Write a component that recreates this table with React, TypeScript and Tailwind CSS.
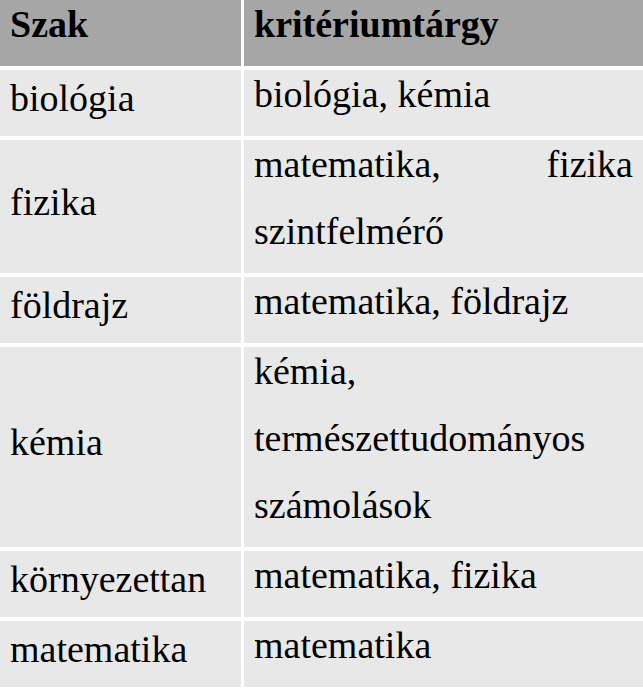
import { Fragment } from 'react';

const rows: { szak: string; targy: string }[] = [
  { szak: 'biológia', targy: 'biológia, kémia' },
  { szak: 'fizika', targy: 'matematika, fizika szintfelmérő' },
  { szak: 'földrajz', targy: 'matematika, földrajz' },
  { szak: 'kémia', targy: 'kémia, természettudományos számolások' },
  { szak: 'környezettan', targy: 'matematika, fizika' },
  { szak: 'matematika', targy: 'matematika' },
];

export default function App() {
  return (
    <div className="w-[643px] h-[696px] overflow-hidden bg-white text-black font-[Liberation_Serif]">
      <div className="grid grid-cols-[241px_1fr] gap-x-[3px] gap-y-[4px]">
        {/* Header */}
        <div className="bg-[#a6a6a6] pl-[10px] pb-[8px]">
          <div className="font-[Liberation_Serif] font-bold text-[38px] -mt-[9px] leading-[67px]">Szak</div>
        </div>
        <div className="bg-[#a6a6a6] pl-[10px] pb-[8px]">
          <div className="font-[Liberation_Serif] font-bold text-[38px] -mt-[9px] leading-[67px]">kritériumtárgy</div>
        </div>

        {/* Body */}
        {rows.map((r) => (
          <Fragment key={r.szak}>
            <div className="bg-[#e8e8e8] pl-[10px] pr-[10px] flex items-center">
              <div className="font-[Liberation_Serif] text-[38px] leading-[67px] -mt-[9px]">{r.szak}</div>
            </div>
            <div className="bg-[#e8e8e8] pl-[10px] pr-[10px] pb-[8px]">
              <div className="font-[Liberation_Serif] text-[38px] -mt-[9px] leading-[67px] text-justify">{r.targy}</div>
            </div>
          </Fragment>
        ))}
      </div>
    </div>
  );
}
